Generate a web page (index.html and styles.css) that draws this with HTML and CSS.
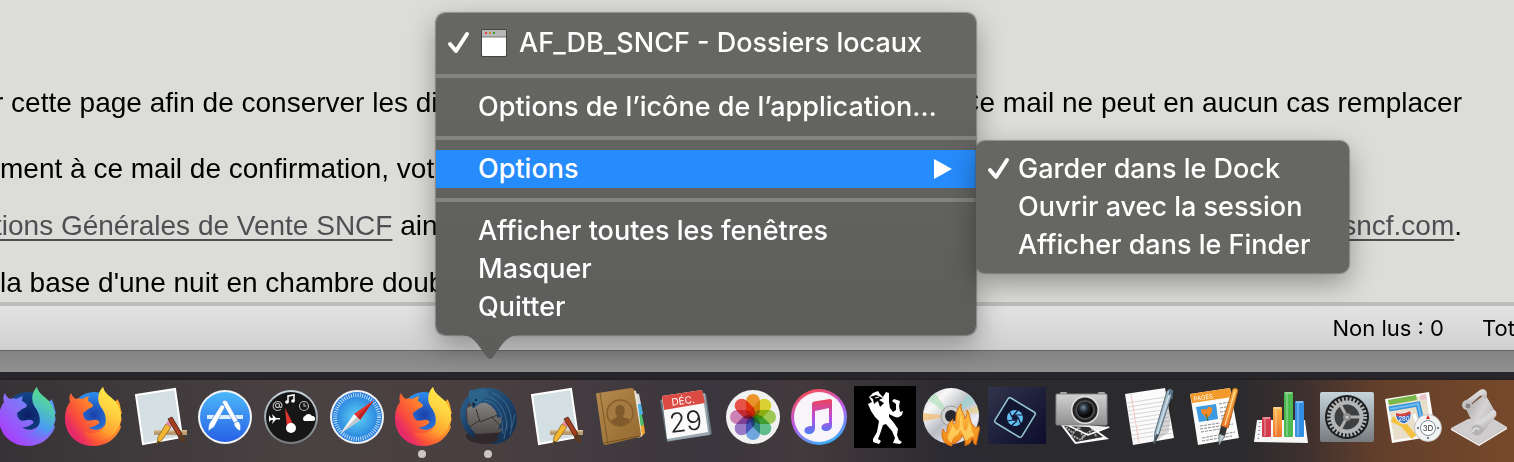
FILE: index.html
```html
<!DOCTYPE html>
<html lang="fr">
  <head>
    <meta charset="UTF-8" />
    <meta name="viewport" content="width=device-width, initial-scale=1.0" />
    <title>Dock</title>
    <link rel="stylesheet" href="styles.css">
  </head>
  <body>
    <!-- shapes and gradients shared by the dock icons -->
    <svg class="defs" width="0" height="0" aria-hidden="true">
      <defs>
        <path id="fox-body" d="M11 9C12 12 14 14 16 15C18 14 20 14 22 15C24 14 26 13 29 12C28 14 28 16 28 17C30 18 33 20 33 22C32 24 29 24 27 26C26 27 24 28 23 29C23 32 24 34 26 36C30 38 33 35 37 36C40 37 40 39 38 40C35 42 32 44 28 43C34 48 43 46 46 39C48 33 45 27 41 23C38 17 38 9 43 3C44 9 49 12 53 16C55 18 57 17 57 15C61 20 60 25 62 29L60 31C63 34 61 38 60 41L61 43C57 54 47 62 33 62C17 62 5 50 5 35C5 27 7 22 10 18C9 15 9 12 11 9Z"/>
        <path id="fox-flame" d="M43 3C37 9 37 17 41 23C49 34 47 46 36 49C30 50 26 49 24 47C26 55 35 59 44 56C54 53 61 43 61 31C60 24 58 21 55 17C50 12 44 9 43 3Z"/>
        <linearGradient id="fox" x1="0.9" y1="0.1" x2="0.1" y2="0.7"><stop offset="0" stop-color="#ffb52c"/><stop offset="0.45" stop-color="#ff8a2b"/><stop offset="0.8" stop-color="#f9503a"/><stop offset="1" stop-color="#e72a68"/></linearGradient>
        <linearGradient id="flame" x1="0.7" y1="0" x2="0.3" y2="1"><stop offset="0" stop-color="#fff04a"/><stop offset="0.4" stop-color="#ffd040"/><stop offset="0.75" stop-color="#ffa030"/><stop offset="1" stop-color="#ff6a2c" stop-opacity="0.300"/></linearGradient>
        <linearGradient id="dev" x1="0" y1="1" x2="1" y2="0"><stop offset="0" stop-color="#b52aff"/><stop offset="0.45" stop-color="#8a6cf8"/><stop offset="1" stop-color="#3aa9f0"/></linearGradient>
        <linearGradient id="dev-flame" x1="0.7" y1="0" x2="0.3" y2="1"><stop offset="0" stop-color="#5fe07e"/><stop offset="0.3" stop-color="#50c8b4"/><stop offset="0.65" stop-color="#4a9cf0"/><stop offset="1" stop-color="#8759ff" stop-opacity="0.300"/></linearGradient>
        <radialGradient id="globe"><stop offset="0" stop-color="#1b3fa8"/><stop offset="1" stop-color="#2f8ff0"/></radialGradient>
        <radialGradient id="night"><stop offset="0" stop-color="#0c1f66"/><stop offset="1" stop-color="#14488c"/></radialGradient>
        <linearGradient id="blue" x1="0" y1="0" x2="0" y2="1"><stop offset="0" stop-color="#4cb8fa"/><stop offset="1" stop-color="#2760e6"/></linearGradient>
        <linearGradient id="silver" x1="0" y1="0" x2="0" y2="1"><stop offset="0" stop-color="#c6d4dc"/><stop offset="1" stop-color="#777b7e"/></linearGradient>
        <radialGradient id="safari"><stop offset="0" stop-color="#5fd3f3"/><stop offset="1" stop-color="#2378dc"/></radialGradient>
        <linearGradient id="wing" x1="0" y1="0" x2="1" y2="1"><stop offset="0" stop-color="#2f6890"/><stop offset="0.5" stop-color="#1c456e"/><stop offset="1" stop-color="#122a4c"/></linearGradient>
        <linearGradient id="letter" x1="0" y1="0" x2="0" y2="1"><stop offset="0" stop-color="#8b8784"/><stop offset="1" stop-color="#4f4b4a"/></linearGradient>
        <linearGradient id="cover" x1="0" y1="0" x2="1" y2="1"><stop offset="0" stop-color="#b58a4e"/><stop offset="1" stop-color="#94692f"/></linearGradient>
        <linearGradient id="tunes" x1="0.3" y1="0" x2="0.7" y2="1"><stop offset="0" stop-color="#fb4d55"/><stop offset="0.5" stop-color="#b65df0"/><stop offset="1" stop-color="#30b8fb"/></linearGradient>
        <linearGradient id="note" x1="0" y1="0" x2="0" y2="1"><stop offset="0" stop-color="#ec4458"/><stop offset="0.55" stop-color="#b84ce0"/><stop offset="1" stop-color="#4b7ff4"/></linearGradient>
        <linearGradient id="disc" x1="0" y1="0" x2="1" y2="1"><stop offset="0" stop-color="#c9c9c9"/><stop offset="0.25" stop-color="#f8f8f8"/><stop offset="0.5" stop-color="#b9bcc2"/><stop offset="0.75" stop-color="#ececf5"/><stop offset="1" stop-color="#a8a8a8"/></linearGradient>
        <linearGradient id="fire" x1="0" y1="0" x2="0" y2="1"><stop offset="0" stop-color="#ffcf4f"/><stop offset="1" stop-color="#f08011"/></linearGradient>
        <linearGradient id="elements" x1="0" y1="0" x2="1" y2="1"><stop offset="0" stop-color="#31344c"/><stop offset="1" stop-color="#0d0c2c"/></linearGradient>
        <linearGradient id="body-grey" x1="0" y1="0" x2="0" y2="1"><stop offset="0" stop-color="#d2d2d2"/><stop offset="1" stop-color="#8f8f8f"/></linearGradient>
        <radialGradient id="lens" cx="0.4" cy="0.35"><stop offset="0" stop-color="#768ba0"/><stop offset="0.5" stop-color="#26303b"/><stop offset="1" stop-color="#080808"/></radialGradient>
        <linearGradient id="orange" x1="0" y1="0" x2="0" y2="1"><stop offset="0" stop-color="#fbb84a"/><stop offset="1" stop-color="#f0742a"/></linearGradient>
        <linearGradient id="scroll" x1="0" y1="0" x2="1" y2="0.6"><stop offset="0" stop-color="#9f9d9d"/><stop offset="0.6" stop-color="#d6d4d4"/><stop offset="1" stop-color="#b9b6b6"/></linearGradient>
        <linearGradient id="roll" x1="0.2" y1="0" x2="0.8" y2="1"><stop offset="0" stop-color="#f4f4f4"/><stop offset="0.5" stop-color="#d3d1d1"/><stop offset="1" stop-color="#8f8d8d"/></linearGradient>
        <symbol id="firefox" viewBox="0 0 66 66">
          <circle cx="34" cy="31" r="23" fill="url(#globe)"/>
          <use href="#fox-body" fill="url(#fox)"/>
          <use href="#fox-flame" fill="url(#flame)"/>
        </symbol>
        <symbol id="drawing" viewBox="0 0 66 66">
          <path d="M10 11L49 5L56 53L17 60Z" fill="#d3dfe3" stroke="#fff" stroke-width="2"/>
          <path d="M28 46H61V51H28Z" fill="#b99b71"/><path d="M28 46H61V47.500H28Z" fill="#d8bf97"/>
          <path d="M40 40L45 43L36 56L31 60L32 53Z" fill="#f2b632" stroke="#8f6514" stroke-width="0.800"/>
          <path d="M40 40L42 37L47 40L45 43Z" fill="#e3879c"/><path d="M32 57L31 60L34 58Z" fill="#222"/>
          <path d="M42 35L46 33L56 50L52 52Z" fill="#a4401f" stroke="#4c1b0c" stroke-width="0.800"/>
          <path d="M52 52L56 50C59 53 59 56 59 59C55 58 52 56 52 52Z" fill="#5b3a22"/>
        </symbol>
      </defs>
    </svg>

    <main class="mail">
      <p class="line clipped first"><span>r cette page afin de conserver les di</span><span>Ce mail ne peut en aucun cas remplacer</span></p>
      <p class="line"><span>ment à ce mail de confirmation, votr</span></p>
      <p class="line clipped"><span><a href="#">tions Générales de Vente SNCF</a> ain</span><span><a href="#">sncf.com</a>.</span></p>
      <p class="line"><span>la base d'une nuit en chambre doub</span></p>
    </main>
    <footer class="status">
      <span>Non lus : 0</span>
      <span class="total">Tot</span>
    </footer>
    <div class="window-edge"></div>

    <nav>
      <ul class="dock">
        <li>
          <svg viewBox="0 0 66 66"><circle cx="34" cy="31" r="23" fill="url(#night)"/><use href="#fox-body" fill="url(#dev)"/><use href="#fox-flame" fill="url(#dev-flame)"/></svg>
        </li>
        <li><svg viewBox="0 0 66 66"><use href="#firefox"/></svg></li>
        <li><svg viewBox="0 0 66 66"><use href="#drawing"/></svg></li>
        <li>
          <svg viewBox="0 0 66 66">
            <circle cx="33" cy="33" r="27" fill="#f3f5f7"/><circle cx="33" cy="33" r="25" fill="url(#blue)"/>
            <path d="M15 31H51V35H15Z" fill="#dfeeff"/>
            <g stroke="#3f86e8" stroke-width="0.600" fill="#fff">
              <path d="M29 21Q31 20 33 23L22 43L16 47L17 40Z"/>
              <path d="M30 18Q32 15 35 17L46 37L42 39Z"/>
              <path d="M42 39L46 37C49 40 49 43 48 47C45 45 42 43 42 39Z"/>
            </g>
          </svg>
        </li>
        <li>
          <svg viewBox="0 0 66 66">
            <circle cx="33" cy="33" r="27" fill="url(#silver)"/><circle cx="33" cy="33" r="25" fill="#161616"/>
            <path d="M27 24L37 44L29 44Z" fill="#e5342d"/><circle cx="33" cy="44" r="5" fill="#fff"/>
            <path d="M30 18V12L36 11V17" fill="none" stroke="#fff" stroke-width="1.500"/><circle cx="29" cy="18" r="1.800" fill="#fff"/><circle cx="35" cy="17" r="1.800" fill="#fff"/>
            <g fill="none" stroke="#bbb" stroke-width="1.100">
              <path d="M23 25A4.500 4.500 0 1 1 24 21C24 25 21 24 21.500 20"/><circle cx="19.500" cy="21.500" r="2"/>
              <circle cx="46" cy="22" r="4.500"/><path d="M46 19V22H48.500"/>
            </g>
            <path d="M11 31L13 34H15L14 30L18 34H22V35.500H18L14 40L15 36H13L11 38Z" fill="#fff"/>
            <path d="M46 37A3 3 0 0 1 47 32A4 4 0 0 1 54 32A2.500 2.500 0 0 1 55 37Z" fill="#fff"/>
          </svg>
        </li>
        <li>
          <svg viewBox="0 0 66 66">
            <circle cx="33" cy="33" r="27" fill="#eff1f3"/><circle cx="33" cy="33" r="25" fill="url(#safari)"/>
            <circle cx="33" cy="33" r="22" fill="none" stroke="#c8e7fb" stroke-width="4" stroke-dasharray="0.900 1.404"/>
            <path d="M50 16L30 30L36 36Z" fill="#e8352f"/><path d="M16 50L30 30L36 36Z" fill="#f5f5f5"/>
            <path d="M50 16L33 33L36 36Z" fill="#b82322"/><path d="M16 50L33 33L36 36Z" fill="#c2c7cb"/>
          </svg>
        </li>
        <li class="running"><svg viewBox="0 0 66 66"><use href="#firefox"/></svg></li>
        <li class="running">
          <svg viewBox="0 0 66 66">
            <ellipse cx="30" cy="52" rx="20" ry="8" fill="#262022" opacity="0.700"/>
            <path d="M11 24L30 16L48 26L51 48L20 50L12 44Z" fill="url(#letter)"/>
            <path d="M20 25L24 38L44 30M12 44L24 36M48 46L36 33" fill="none" stroke="#35302f" stroke-width="1"/>
            <path d="M12 12C6 18 3 27 5 36C7 44 11 51 20 55L17 49L21 51C14 44 10 38 10 30C10 24 12 20 16 17Z" fill="url(#wing)"/>
            <path d="M14 6C18 7 21 4 26 4C40 2 52 9 58 22C62 31 62 42 56 50C52 57 44 61 34 60C40 58 43 56 44 53L39 55C44 50 46 47 46 44L42 45C45 40 46 36 45 33L41 34C42 29 38 23 32 20C29 18 26 19 23 20C20 22 18 25 17 24C16 22 16 20 16 18C12 16 12 10 14 6Z" fill="url(#wing)"/>
            <path d="M30 12C43 15 51 27 51 46M36 9C50 14 57 28 55 44M46 36L47 50M51 38L48 55M59 30L54 51M28 16C38 17 44 25 46 34" fill="none" stroke="#4f86a6" stroke-width="1" opacity="0.600"/>
            <path d="M14 6C18 7 22 5 27 5C31 6 33 8 31 11C27 12 27 17 23 19C21 20 19 22 17 24C15 19 13 18 13 14C12 11 13 8 14 6Z" fill="#2c6389"/>
            <circle cx="20" cy="16" r="1" fill="#0b1c30"/><path d="M17 24L16 18L20 20Z" fill="#14283c"/>
          </svg>
        </li>
        <li><svg viewBox="0 0 66 66"><use href="#drawing"/></svg></li>
        <li>
          <svg viewBox="0 0 66 66">
            <path d="M47 9L51 10L53 20L49 22Z" fill="#d9d9d9"/><path d="M49 20L53 20L55 30L51 32Z" fill="#4fb2e5"/><path d="M50 31L54 31L56 41L52 43Z" fill="#4cc16a"/><path d="M52 42L56 41L57 49L53 53Z" fill="#f2a52f"/>
            <path d="M44 6L48 7L54 52L50 54Z" fill="#eee8dc"/>
            <path d="M8 10Q8 9 10 9L43 4Q46 4 46 6L53 50Q53 53 51 53L18 61Q16 61 15 59Z" fill="url(#cover)"/>
            <path d="M12 9L20 60" stroke="#7d5927" stroke-width="1"/><path d="M16 59L52 52" stroke="#73501f" stroke-width="1"/>
            <circle cx="32" cy="29" r="13" fill="#a67b41" stroke="#855f2d" stroke-width="1.500"/>
            <path d="M23 37C25 34 29 35 29 32C26 28 27 21 32 21C37 21 38 27 35 32C36 35 40 33 42 36C37 43 28 43 23 37Z" fill="#7e5a2c"/>
          </svg>
        </li>
        <li>
          <svg viewBox="0 0 66 66">
            <path d="M6 16L52 10L58 50L13 58Z" fill="#66757d"/><path d="M8 15L51 9L56 51L14 57Z" fill="#9aa9b1"/>
            <path d="M8 12L48 6L54 48L13 55Z" fill="#fafafa"/><path d="M8 12L48 6L51 19L10 26Z" fill="#db4a43"/>
            <g transform="rotate(-7 32 32)">
              <text class="cal-month" x="31" y="20">DÉC.</text>
              <text class="cal-day" x="31" y="47">29</text>
            </g>
          </svg>
        </li>
        <li>
          <svg viewBox="0 0 66 66">
            <circle cx="33" cy="33" r="27" fill="#f1f1f1"/>
            <g class="petals">
              <rect x="26" y="10" width="14" height="23" rx="7" fill="#f99d2e"/>
              <rect x="26" y="10" width="14" height="23" rx="7" fill="#e6dc33" transform="rotate(45 33 33)"/>
              <rect x="26" y="10" width="14" height="23" rx="7" fill="#a5d458" transform="rotate(90 33 33)"/>
              <rect x="26" y="10" width="14" height="23" rx="7" fill="#66c795" transform="rotate(135 33 33)"/>
              <rect x="26" y="10" width="14" height="23" rx="7" fill="#76b0ea" transform="rotate(180 33 33)"/>
              <rect x="26" y="10" width="14" height="23" rx="7" fill="#a080d4" transform="rotate(225 33 33)"/>
              <rect x="26" y="10" width="14" height="23" rx="7" fill="#d987bf" transform="rotate(270 33 33)"/>
              <rect x="26" y="10" width="14" height="23" rx="7" fill="#f4564c" transform="rotate(315 33 33)"/>
            </g>
          </svg>
        </li>
        <li>
          <svg viewBox="0 0 66 66">
            <circle cx="33" cy="33" r="28" fill="url(#tunes)"/><circle cx="33" cy="33" r="25" fill="#f7f5fa"/>
            <path d="M26 20Q26 18 28 17.500L44 15Q46 15 46 17V42C46 45 43 47 40 47C37 47 35 45 35.500 43C36 40 39 39 43 39V24L29 27V44C29 48 26 50 23 50C20 50 18 48 18.500 46C19 43 22 42 26 42Z" fill="url(#note)"/>
          </svg>
        </li>
        <li>
          <svg viewBox="0 0 66 66">
            <rect x="2" y="2" width="62" height="62" fill="#000"/>
            <path d="M17 13L21 9L26 7L28 10L31 13L34 8L37 9L37 18L38 24L41 28L44 26L44 20L40 17L42 15L48 17L47 22L48 28L51 27L50 31L47 33C45 34 43 33 41 32L37 30L37 33L42 39L46 45L45 51L47 56L50 58L48 60L41 59L43 54L40 47L34 40L31 41L28 50L26 55L29 57L27 60L21 58L21 55L25 48L27 37L23 33L19 27L16 20L20 18Z" fill="#fff"/>
            <path d="M18 13L24 11L31 14L27 16L32 19L28 23L26 17L22 20L21 15Z" fill="#000"/><path d="M20 12L23 9M23 14L27 13M24 18L26 22" stroke="#fff" stroke-width="1"/>
          </svg>
        </li>
        <li>
          <svg viewBox="0 0 66 66">
            <circle cx="33" cy="32" r="28" fill="url(#disc)"/>
            <path d="M33 32L10 16A28 28 0 0 1 17 9Z" fill="#a9dfb6" opacity="0.600"/><path d="M33 32L5 29V37Z" fill="#f4bf7b" opacity="0.800"/><path d="M33 32L50 10A28 28 0 0 1 57 18Z" fill="#9adbd6" opacity="0.600"/><path d="M33 32L59 22L61 29Z" fill="#edd179" opacity="0.600"/><path d="M33 32L31 60L41 59Z" fill="#bbb4ff" opacity="0.600"/>
            <circle cx="33" cy="32" r="10" fill="#cfcfcf" stroke="#999"/><circle cx="33" cy="32" r="6" fill="#28292f"/>
            <path d="M34 62C26 61 22 53 25 45C27 49 28 50 29 47C29 41 31 39 35 35C34 39 37 42 38 38C37 29 40 24 43 20C42 28 47 29 47 35C49 33 49 29 49 26C53 32 51 37 55 41C57 44 58 45 61 42C62 48 60 49 60 52L58 61C55 60 56 57 54 54C53 61 49 60 47 62C48 57 46 54 44 51C43 58 38 56 37 60L34 58Z" fill="url(#fire)" stroke="#d86a12" stroke-width="1"/>
            <path d="M31 57C27 51 34 48 34 41C39 46 38 48 41 44C43 38 41 35 43 31C46 38 43 44 48 47C51 42 50 40 51 37C54 43 53 48 57 52C51 51 50 58 47 56C46 50 42 47 42 45C41 54 34 50 34 59Z" fill="#ffd96b" opacity="0.750"/>
          </svg>
        </li>
        <li>
          <svg viewBox="0 0 66 66">
            <rect x="4" y="3" width="58" height="57" fill="url(#elements)"/>
            <path d="M27 14L50 28Q52 29 51 31L38 52Q37 54 35 53L12 39Q10 38 11 36L24 15Q25 13 27 14Z" fill="#131630" stroke="#96c9d3" stroke-width="1.500"/>
            <circle cx="31" cy="34" r="8" fill="#60bff0"/><circle cx="31" cy="34" r="3" fill="#14193a"/>
            <path d="M28 33L34 26M31 31L39 31M34 33L37 41M33 37L27 42M29 36L23 37M28 33L25 27" stroke="#14193a" stroke-width="1.200"/>
          </svg>
        </li>
        <li>
          <svg viewBox="0 0 66 66">
            <path d="M12 39L60 43L41 51L25 52Z" fill="#eee"/><path d="M10 40L25 60L59 55L39 41Z" fill="#fafafa"/><path d="M14 42L26 58L53 53L39 43Z" fill="#2f2f2f"/><path d="M16 43L23 49L29 43L33 53L42 46L47 53M21 51L31 56L36 49" fill="none" stroke="#a9a9a9" stroke-width="2" stroke-dasharray="2 1"/><path d="M15 40L38 51L59 43" fill="none" stroke="#fff" stroke-width="1.500"/>
            <rect x="10" y="8" width="7" height="4" rx="1" fill="#aaa"/><rect x="48" y="8" width="7" height="4" rx="1" fill="#aaa"/>
            <rect x="6" y="10" width="51" height="31" rx="1" fill="url(#body-grey)" stroke="#858585"/>
            <circle cx="35" cy="26" r="14" fill="#e0e0e0"/><circle cx="35" cy="26" r="12.500" fill="#222"/><circle cx="35" cy="26" r="10" fill="#4a4a4a"/><circle cx="35" cy="26" r="8" fill="url(#lens)"/>
          </svg>
        </li>
        <li>
          <svg viewBox="0 0 66 66">
            <path d="M9 10L49 4L58 54L17 61Z" fill="#fbfbfb"/>
            <path d="M11 19L50 13M12 23L51 17M12 27L51 21M13 31L52 25M14 35L53 29M14 39L53 33M15 43L54 37M16 47L55 41M16 51L56 45M17 55L56 49" stroke="#d6d6d6" stroke-width="1"/>
            <path d="M15 10L23 59" stroke="#f6c4c4" stroke-width="1"/>
            <path d="M40 57L56 14L53 48Z" fill="#000" opacity="0.150"/>
            <path d="M51 7L54 5L57 7L43 50L38 60L39 48Z" fill="#a2bac9" stroke="#566b79" stroke-width="1"/><path d="M54 8L41 50" stroke="#e2eef5" stroke-width="1"/><path d="M40 50L43 51L38 60Z" fill="#454b50"/><path d="M53 11L55 5L56 15" fill="none" stroke="#526b80" stroke-width="1.500"/>
          </svg>
        </li>
        <li>
          <svg viewBox="0 0 66 66">
            <path d="M8 10L48 4L57 54L16 61Z" fill="#fbfbfb"/><path d="M8 10L48 4L50 13L10 19Z" fill="#f29b2c"/>
            <text class="pages-title" x="12" y="17" transform="rotate(-8 12 17)">PAGES</text>
            <path d="M14 23L34 20L36 35L17 38Z" fill="#3c9be3"/><path d="M19 26C21 23 25 28 26 23C29 23 31 23 30 27C29 32 26 31 25 36C24 31 19 31 19 26Z" fill="#f48a28"/><path d="M24 30L26 37" stroke="#3b6a27"/>
            <path d="M37 20L48 18M38 24L49 22M38 28L50 26M39 32L50 30M39 35L51 33M18 42L38 39M18 45L51 40M19 48L38 45M20 54L53 48M20 57L50 52" stroke="#8e8e8e" stroke-width="1" stroke-dasharray="3 1"/>
            <path d="M51 5Q54 3 56 6L46 44L39 42Z" fill="url(#orange)" stroke="#b1661a" stroke-width="1"/><path d="M53 7L43 41" stroke="#ffe0a0" stroke-width="1.200"/>
            <path d="M39 42L45 44L43 52L37 50Z" fill="#333"/><path d="M37 50L43 52L37 61Z" fill="#bfcbd2" stroke="#5f6a70" stroke-width="0.800"/>
          </svg>
        </li>
        <li>
          <svg viewBox="0 0 66 66">
            <path d="M9 36H57L60 59L6 58Z" fill="#f6f6f6"/><path d="M12 38L10 57" stroke="#777" stroke-width="1.500" stroke-dasharray="1 3"/>
            <rect x="14" y="33" width="9" height="20" rx="1" fill="#d33d4e"/><rect x="25" y="23" width="9" height="30" rx="1" fill="url(#orange)"/><rect x="36" y="8" width="9" height="45" rx="1" fill="#4bb850"/><rect x="47" y="17" width="9" height="36" rx="1" fill="#328fe2"/>
            <path d="M15 34H22M26 24H33M37 9H44M48 18H55" stroke="#fff" stroke-width="2" opacity="0.400"/><path d="M17 35V52M28 25V52M39 10V52M50 19V52" stroke="#fff" stroke-width="2" opacity="0.250"/>
          </svg>
        </li>
        <li>
          <svg viewBox="0 0 66 66">
            <rect x="6" y="8" width="54" height="50" rx="2" fill="url(#silver)"/><circle cx="33" cy="33" r="22" fill="#1b1d1f"/>
            <circle cx="33" cy="33" r="18" fill="none" stroke="#aeb0b2" stroke-width="4" stroke-dasharray="2.100 1.670"/><circle cx="33" cy="33" r="14.500" fill="#3d3f41" stroke="#b4b5b6" stroke-width="4"/>
            <path d="M33 33L26 20M33 33H48M33 33L26 46" stroke="#b0b0b0" stroke-width="3"/><circle cx="33" cy="33" r="4" fill="#8c8c8c"/><circle cx="33" cy="33" r="1.500" fill="#ccc"/>
          </svg>
        </li>
        <li>
          <svg viewBox="0 0 66 66">
            <path d="M5 15L49 8L56 52L12 59Z" fill="#fafafa"/><path d="M8 17L46 11L52 50L14 56Z" fill="#e7dfca"/>
            <path d="M8 16L36 11L37 16L9 21Z" fill="#79b849"/><path d="M40 11L46 10L47 15L41 16Z" fill="#ecc2ca"/>
            <path d="M9 25L38 20L42 38" fill="none" stroke="#3594dc" stroke-width="5"/><path d="M10 25L38 20L42 38" fill="none" stroke="#71baf0" stroke-width="2"/>
            <path d="M12 35L23 40L34 53" fill="none" stroke="#f4c241" stroke-width="6"/><path d="M34 30L39 46" stroke="#fff" stroke-width="3"/>
            <path d="M16 29Q23 31 30 27Q34 36 24 40Q14 37 16 29Z" fill="#3c70c5" stroke="#fff"/><path d="M16 29Q23 31 30 27L31 30Q23 34 16 32Z" fill="#d54442"/>
            <text class="route" x="24" y="37">280</text>
            <circle cx="48" cy="44" r="13.500" fill="#f2f2f2" stroke="#bbb" stroke-width="0.800"/><circle cx="48" cy="44" r="7.500" fill="#fff" stroke="#7b8b95" stroke-width="1"/>
            <text class="compass" x="48" y="47">3D</text><path d="M48 31L50 35H46Z" fill="#d92c28"/><circle cx="38" cy="44" r="1" fill="#555"/><circle cx="58" cy="44" r="1" fill="#555"/><circle cx="48" cy="54" r="1" fill="#555"/>
          </svg>
        </li>
        <li>
          <svg viewBox="0 0 66 66">
            <path d="M5 44L22 35L46 34L61 43L33 60Z" fill="#cfcdcd"/><path d="M5 44L33 60L61 43V45L33 62L5 46Z" fill="#f0f0f0"/>
            <path d="M20 25L39 10L50 29L30 46Z" fill="url(#scroll)"/>
            <path d="M18 18L34 6C37 4 41 6 41 10C41 12 40 14 39 15C38 12 36 11 34 12L24 21Z" fill="url(#roll)"/>
            <circle cx="21" cy="21" r="5" fill="#c3c1c1"/><circle cx="22" cy="22" r="2.500" fill="#868484"/>
            <path d="M29 41L47 26C50 26 51 29 50 32L36 49Z" fill="url(#roll)"/>
            <circle cx="31" cy="46" r="5.500" fill="#b5b3b3"/><path d="M27 48C27 44 32 43 33 46" fill="none" stroke="#e5e5e5" stroke-width="1.500"/>
          </svg>
        </li>
      </ul>
    </nav>

    <div class="menu main-menu">
      <button class="item window-item">
        <svg class="check" viewBox="0 0 24 24"><path d="M3 13L9 20L20 3"/></svg>
        <svg class="window-icon" viewBox="0 0 26 28">
          <rect x="0" y="0" width="26" height="28" rx="2" fill="#444"/><rect x="1" y="1" width="24" height="26" rx="1" fill="#fff"/><rect x="1" y="1" width="24" height="7" fill="#b7b7b7"/><path d="M1 8H25" stroke="#777"/>
          <rect x="4" y="3" width="2" height="2" fill="#e43d3d"/><rect x="8" y="3" width="2" height="2" fill="#c99128"/><rect x="12" y="3" width="2" height="2" fill="#3a9a32"/>
        </svg>
        AF_DB_SNCF - Dossiers locaux
      </button>
      <hr>
      <button class="item">Options de l’icône de l’application…</button>
      <hr>
      <button class="item selected">Options <svg class="arrow" viewBox="0 0 18 20"><path d="M0 0L18 10L0 20Z"/></svg></button>
      <hr>
      <button class="item">Afficher toutes les fenêtres</button>
      <button class="item">Masquer</button>
      <button class="item">Quitter</button>
      <svg class="pointer" viewBox="0 0 60 25"><path d="M0 0C14 0 17 9 27 22Q30 26 33 22C43 9 46 0 60 0Z"/></svg>
    </div>

    <div class="menu sub-menu">
      <button class="item"><svg class="check" viewBox="0 0 24 24"><path d="M3 13L9 20L20 3"/></svg>Garder dans le Dock</button>
      <button class="item">Ouvrir avec la session</button>
      <button class="item">Afficher dans le Finder</button>
    </div>
  </body>
</html>
```
FILE: styles.css
```css
body {
  margin: 0;
  overflow: hidden;
  position: relative;
  background-color: #2d2a2d;
  font-family: Inter, "Liberation Sans", sans-serif;
}
.defs {
  position: absolute;
}

/* mail window */
.mail {
  background-color: #dcddd8;
  border-bottom: 4px solid #bcbcbc;
  padding: 84px 52px 1px 0;
  font-family: "Liberation Sans", Arial, sans-serif;
  font-size: 28px;
  line-height: 37px;
  color: #000;
}
.line {
  display: flex;
  justify-content: space-between;
  margin: 0 0 20px;
  white-space: nowrap;
}
.line.first {
  margin-bottom: 29px;
}
.line:last-child {
  margin-bottom: 0;
}
.clipped {
  margin-left: -6px;
}
.mail a {
  color: #4d4f53;
  text-decoration-thickness: 2px;
  text-underline-offset: 4px;
}
.status {
  display: flex;
  justify-content: flex-end;
  gap: 38px;
  background: linear-gradient(#e3e3e3, #cfcfcf);
  border-bottom: 1px solid #666;
  font-size: 22px;
  line-height: 44px;
  color: #000;
  white-space: nowrap;
}
.total {
  width: 32px;
  overflow: hidden;
}
.window-edge {
  height: 21px;
  background: linear-gradient(#838383, #909090);
}

/* dock */
nav {
  border-top: 6px solid #28262a;
}
.dock {
  display: flex;
  margin: 0;
  padding: 4px 0 12px;
  border-top: 2px solid #252122;
  list-style: none;
  background: linear-gradient(90deg, #373235, #3e393b 8%, #4a4142 20%, #493f41 33%, #3a363d 47%, #433a3d 53%, #2b2a30 63%, #2b2b2d 82%, #3d302f 86%, #633f2b 91%, #76492a);
}
.dock li {
  flex: none;
  position: relative;
  width: 66px;
  height: 66px;
}
.dock li:first-child {
  margin-left: -6px;
}
.dock svg {
  display: block;
  width: 66px;
  height: 66px;
}
.running::after {
  content: "";
  position: absolute;
  left: 28px;
  top: 66px;
  width: 8px;
  height: 8px;
  border-radius: 50%;
  background-color: #cbc5c6;
}
.petals rect {
  mix-blend-mode: multiply;
}
.dock text {
  text-anchor: middle;
}
.cal-month {
  font-size: 10px;
  fill: #fff;
}
.cal-day {
  font-size: 27px;
  font-weight: 300;
  fill: #222;
}
.dock .pages-title {
  font-size: 6px;
  fill: #fff;
  text-anchor: start;
}
.route {
  font-size: 6px;
  fill: #fff;
}
.compass {
  font-size: 8px;
  fill: #333;
}

/* menus */
.menu {
  position: absolute;
  box-sizing: border-box;
  padding: 9px 0;
  border-radius: 9px;
  background: linear-gradient(#676764, #5d5d5b);
  box-shadow: 0 0 1px 1px rgba(80, 80, 80, 0.5), 0 10px 28px rgba(0, 0, 0, 0.35);
}
.main-menu {
  left: 436px;
  top: 13px;
  width: 540px;
}
.sub-menu {
  left: 976px;
  top: 141px;
  width: 373px;
  background: #666663;
}
.item {
  display: flex;
  align-items: center;
  position: relative;
  width: 100%;
  height: 38px;
  margin: 0;
  padding: 0 24px 0 42px;
  border: none;
  background: none;
  color: #fff;
  font-family: inherit;
  font-size: 27px;
  font-weight: 500;
  line-height: 38px;
  text-align: left;
  white-space: nowrap;
}
.window-item {
  gap: 12px;
  height: 42px;
  padding-left: 45px;
}
.item.selected {
  justify-content: space-between;
  background-color: #268bfb;
}
.menu hr {
  height: 4px;
  margin: 10px 0;
  border: none;
  background-color: #83837f;
}
.check {
  position: absolute;
  left: 11px;
  width: 24px;
  height: 24px;
}
.check path {
  fill: none;
  stroke: #fff;
  stroke-width: 4;
  stroke-linecap: round;
  stroke-linejoin: round;
}
.window-icon {
  width: 26px;
  height: 28px;
}
.arrow {
  width: 18px;
  height: 20px;
  fill: #fff;
}
.pointer {
  position: absolute;
  left: 24px;
  top: 100%;
  width: 60px;
  height: 25px;
  fill: #5d5d5b;
}
```
